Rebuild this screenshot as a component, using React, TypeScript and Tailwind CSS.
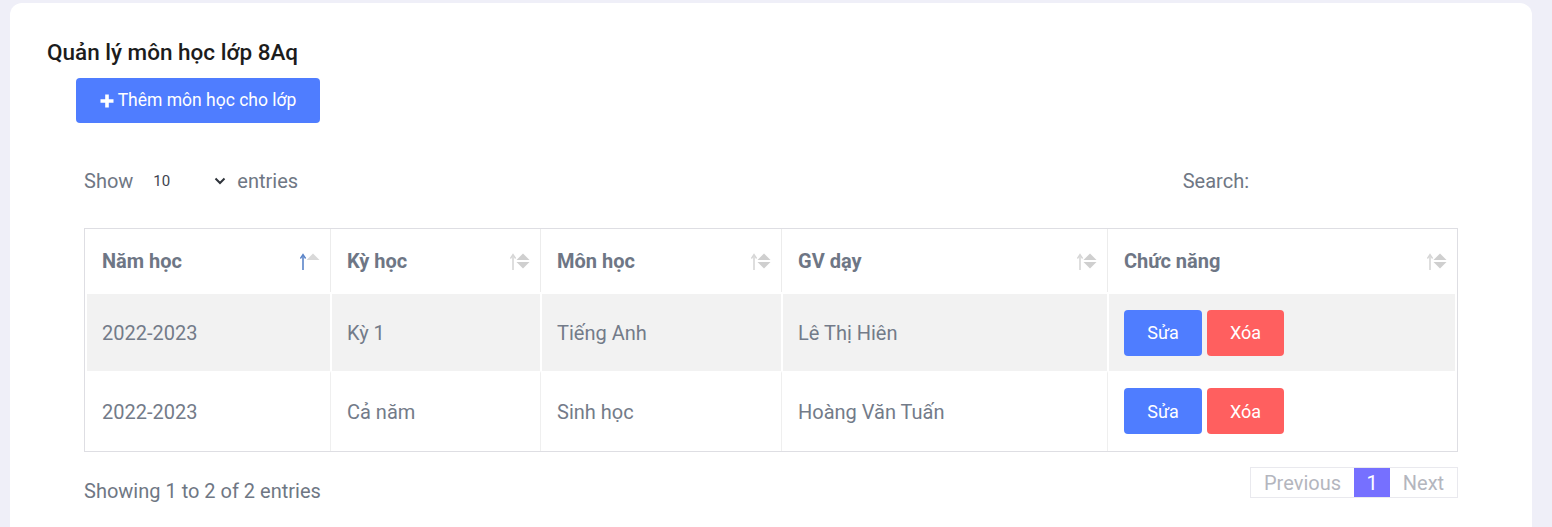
import React from 'react'

const rows = [
  { year: '2022-2023', term: 'Kỳ 1', subject: 'Tiếng Anh', teacher: 'Lê Thị Hiên' },
  { year: '2022-2023', term: 'Cả năm', subject: 'Sinh học', teacher: 'Hoàng Văn Tuấn' },
]

function SortIcon({ active }: { active?: boolean }) {
  return (
    <svg width="20" height="20" viewBox="0 0 20 20" className="shrink-0">
      <line x1="3" y1="4" x2="3" y2="19" stroke={active ? '#5b84c8' : '#d6d6d6'} strokeWidth="1.6" />
      <path d="M0.4 7.5 L3 3.6 L5.6 7.5" fill="none" stroke={active ? '#5b84c8' : '#d6d6d6'} strokeWidth="1.4" />
      <path d="M6.5 9 L13 2.5 L19.5 9 Z" fill={active ? '#d9d9d9' : '#cfcfcf'} />
      {!active && <path d="M6.5 11 L13 17.5 L19.5 11 Z" fill="#cfcfcf" />}
    </svg>
  )
}

export default function App() {
  const headers = ['Năm học', 'Kỳ học', 'Môn học', 'GV dạy', 'Chức năng']

  return (
    <div className="min-h-[527px] bg-[#efeff8] pt-[3px] pl-[10px] font-['Roboto',sans-serif]">
      <div className="w-[1522px] min-h-[540px] rounded-xl bg-white pl-[37px] pt-[35px]">
        <h1 className="text-[22.5px] leading-[28px] font-medium text-[#1c1c1c]">Quản lý môn học lớp 8Aq</h1>

        <button className="ml-[29px] mt-[12px] flex h-[45px] w-[244px] items-center justify-center gap-[4px] rounded-[4px] bg-[#4f7dff] text-[17.5px] text-white">
          <svg width="14" height="14" viewBox="0 0 14 14">
            <path d="M5.2 0.5h3.6v4.7h4.7v3.6h-4.7v4.7h-3.6v-4.7h-4.7v-3.6h4.7z" fill="white" />
          </svg>
          Thêm môn học cho lớp
        </button>

        <div className="ml-[37px] w-[1374px]">
          <div className="mt-[44px] flex h-[28px] items-center justify-between text-[20px] text-[#6f7784]">
            <div className="flex items-center">
              <span>Show</span>
              <div className="ml-[20px] flex w-[80px] items-center justify-between text-[15px] text-[#3d4450]">
                <span>10</span>
                <svg width="12" height="8" viewBox="0 0 12 8" className="mr-[7px]">
                  <path d="M1.5 1.5 L6 6 L10.5 1.5" fill="none" stroke="#2f343b" strokeWidth="2" />
                </svg>
              </div>
              <span className="ml-[4px]">entries</span>
            </div>
            <div className="flex items-center">
              <span>Search:</span>
              <input className="ml-[6px] w-[203px] outline-none" />
            </div>
          </div>

          <table className="mt-[33px] w-[1374px] table-fixed border-separate border-spacing-0 border border-[#dedee3]">
            <colgroup>
              <col className="w-[245px]" />
              <col className="w-[210px]" />
              <col className="w-[241px]" />
              <col className="w-[326px]" />
              <col className="w-[350px]" />
            </colgroup>
            <thead>
              <tr className="h-[63px]">
                {headers.map((h, i) => (
                  <th
                    key={h}
                    className={`pr-[17px] text-left text-[20px] font-bold text-[#6e7685] ${i > 0 ? 'border-l border-[#ececec] pl-[16px]' : 'pl-[17px]'}`}
                  >
                    <div className="flex items-center justify-between">
                      <span>{h}</span>
                      <span className="-mr-[7px]"><SortIcon active={i === 0} /></span>
                    </div>
                  </th>
                ))}
              </tr>
            </thead>
            <tbody className="text-[20px] text-[#737b89]">
              {rows.map((r, ri) => {
                const first = ri === 0
                const cell = first
                  ? 'bg-[#f2f2f2] border-t-2 border-l-2 border-white pl-[15px]'
                  : 'border-t-2 border-white pl-[16px]'
                const sep = first ? '' : 'border-l border-l-[#efefef]'
                return (
                  <tr key={ri} className={first ? 'h-[79px]' : 'h-[80px]'}>
                    <td className={`${cell} ${first ? '' : 'pl-[17px]'}`}>{r.year}</td>
                    <td className={`${cell} ${sep}`}>{r.term}</td>
                    <td className={`${cell} ${sep}`}>{r.subject}</td>
                    <td className={`${cell} ${sep}`}>{r.teacher}</td>
                    <td className={`${cell} ${sep} ${first ? 'border-r-2' : ''}`}>
                      <div className={`flex gap-[5px] text-[18px] text-white ${first ? '' : '-mt-[2px]'}`}>
                        <button className="h-[46px] w-[78px] rounded-[4px] bg-[#4f7dff]">Sửa</button>
                        <button className="h-[46px] w-[77px] rounded-[4px] bg-[#ff5f5f]">Xóa</button>
                      </div>
                    </td>
                  </tr>
                )
              })}
            </tbody>
          </table>

          <div className="mt-[15px] flex items-start justify-between">
            <div className="mt-[10px] text-[20px] leading-[28px] text-[#6f7784]">Showing 1 to 2 of 2 entries</div>
            <div className="flex h-[31px] border border-[#e9e9ee] text-[20px] text-[#b4b6be]">
              <span className="flex w-[103px] items-center justify-center">Previous</span>
              <span className="flex w-[36px] items-center justify-center bg-[#7670ff] text-white">1</span>
              <span className="flex w-[67px] items-center justify-center">Next</span>
            </div>
          </div>
        </div>
      </div>
    </div>
  )
}
